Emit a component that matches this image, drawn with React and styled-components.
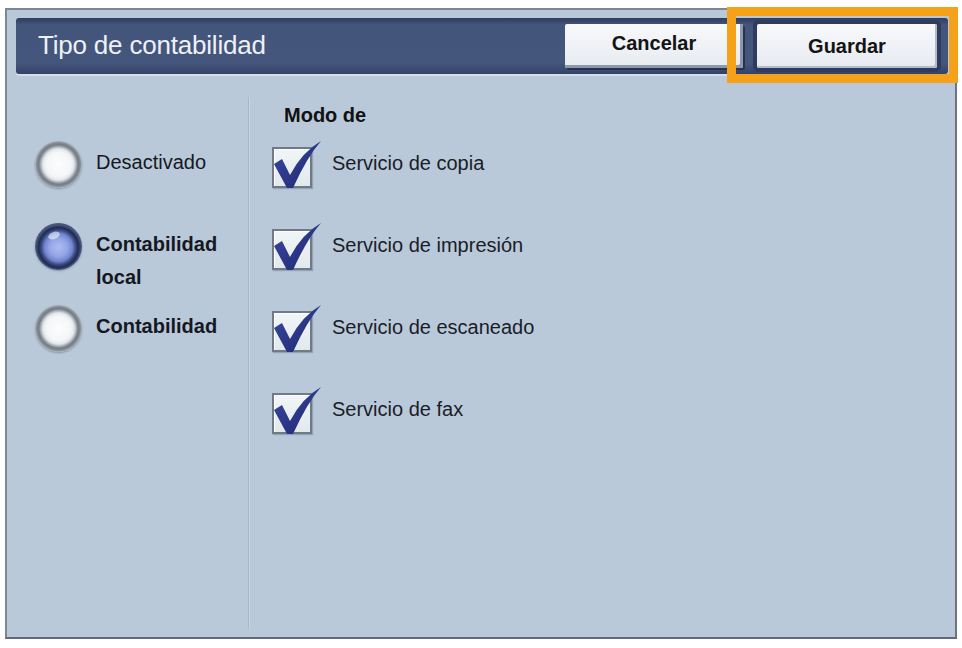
import React from 'react';
import styled, { createGlobalStyle } from 'styled-components';

const GlobalStyle = createGlobalStyle`
    body {
        margin: 0;
        background: #ffffff;
        font-family: "Liberation Sans", Arial, sans-serif;
    }
`;

const modes = [
    { id: 'off', label: ['Desactivado'], bold: false, checked: false },
    { id: 'local', label: ['Contabilidad', 'local'], bold: true, checked: true },
    { id: 'net', label: ['Contabilidad'], bold: true, checked: false },
];

const services = [
    'Servicio de copia',
    'Servicio de impresión',
    'Servicio de escaneado',
    'Servicio de fax',
];

const CheckMark = () => (
    <CheckSvg viewBox="0 0 52 54" width="52" height="54">
        <defs>
            <linearGradient id="tick" x1="0" y1="0" x2="1" y2="1">
                <stop offset="0" stopColor="#3a49a2" />
                <stop offset="1" stopColor="#1e276e" />
            </linearGradient>
        </defs>
        <path
            d="M2 27 L10 22 L18 38 Q30 15 49 4 Q35 20 21 51 L15 51 Z"
            fill="url(#tick)"
        />
    </CheckSvg>
);

const App = () => {
    return (
        <>
            <GlobalStyle />
            <Frame>
                <Header>
                    <Title>Tipo de contabilidad</Title>
                    <Actions>
                        <Button>Cancelar</Button>
                        <SaveSlot>
                            <Button selected>Guardar</Button>
                            <Highlight />
                        </SaveSlot>
                    </Actions>
                </Header>
                <Body>
                    <RadioColumn>
                        {modes.map(item => (
                            <RadioRow key={item.id}>
                                <Radio checked={item.checked} />
                                <RadioLabel bold={item.bold}>
                                    {item.label.map(line => (
                                        <div key={line}>{line}</div>
                                    ))}
                                </RadioLabel>
                            </RadioRow>
                        ))}
                    </RadioColumn>
                    <Divider />
                    <ServiceColumn>
                        <Heading>Modo de</Heading>
                        <ServiceList>
                            {services.map(name => (
                                <ServiceRow key={name}>
                                    <Box>
                                        <CheckMark />
                                    </Box>
                                    <ServiceLabel>{name}</ServiceLabel>
                                </ServiceRow>
                            ))}
                        </ServiceList>
                    </ServiceColumn>
                </Body>
            </Frame>
        </>
    );
};

const Frame = styled.div`
    box-sizing: border-box;
    width: 952px;
    height: 631px;
    margin: 8px 0 0 5px;
    padding: 8px 7px 0 9px;
    border: 2px solid #7c8794;
    border-bottom-color: #5f6a78;
    border-right-color: #6a7483;
    background: #b9c9da;
    display: flex;
    flex-direction: column;
`;

const Header = styled.div`
    height: 56px;
    border-radius: 3px;
    background: linear-gradient(#2e3c5e 0, #44557b 12%, #45567c 80%, #33426a 100%);
    display: flex;
    align-items: center;
    justify-content: space-between;
    padding: 0 11px 0 22px;
    box-shadow: 0 2px 0 #d3dde8;
`;

const Title = styled.div`
    color: #eef1f6;
    font-size: 26px;
    letter-spacing: -0.2px;
    margin-top: -1px;
`;

const Actions = styled.div`
    display: flex;
    align-items: center;
    gap: 14px;
`;

const SaveSlot = styled.div`
    position: relative;
    display: flex;
`;

const Button = styled.div`
    box-sizing: border-box;
    width: ${props => (props.selected ? '180px' : '178px')};
    height: 44px;
    display: flex;
    align-items: center;
    justify-content: center;
    padding-bottom: ${props => (props.selected ? '0' : '5px')};
    font-size: 20px;
    font-weight: bold;
    color: #141414;
    background: linear-gradient(#f8f9fb, #e6eaf0);
    border-radius: 2px;
    box-shadow: ${props =>
        props.selected
            ? '0 0 0 4px #2f3c5f, inset -2px -2px 0 #b3bccb'
            : 'inset -3px -3px 0 #8e98ad, 2px 2px 0 #27324f'};
`;

const Highlight = styled.div`
    position: absolute;
    left: -30px;
    right: -21px;
    top: -17px;
    bottom: -15px;
    border: 9px solid #f5a21a;
    pointer-events: none;
`;

const Body = styled.div`
    flex: 1;
    display: flex;
    margin-left: -9px;
`;

const RadioColumn = styled.div`
    width: 241px;
    padding: 67px 0 0 28px;
    box-sizing: border-box;
    display: grid;
    grid-auto-rows: 82px;
    align-content: start;
`;

const RadioRow = styled.div`
    display: flex;
    align-items: flex-start;
    gap: 14px;
`;

const Radio = styled.div`
    position: relative;
    flex: none;
    width: 47px;
    height: 47px;
    border-radius: 50%;
    box-shadow: 0 1px 2px rgba(40, 50, 70, 0.35);
    background: ${props =>
        props.checked
            ? 'radial-gradient(circle closest-side at 50% 52%, #aebcf3 0, #93a5e6 40%, #7385cc 62%, #3c4d84 76%, #1f2b52 88%, #49557a 100%)'
            : 'radial-gradient(circle closest-side at 50% 50%, #fdfdfe 0, #f4f6f8 52%, #e4e8ec 66%, #b3bac1 74%, #737b84 84%, #858d96 93%, #b0b7bf 100%)'};

    &::after {
        content: '';
        position: absolute;
        left: 13px;
        top: 9px;
        width: 12px;
        height: 7px;
        border-radius: 50%;
        background: rgba(255, 255, 255, ${props => (props.checked ? 0.55 : 0)});
        transform: rotate(-20deg);
    }
`;

const RadioLabel = styled.div`
    margin-top: 5px;
    font-size: 20px;
    line-height: 33px;
    font-weight: ${props => (props.bold ? 'bold' : 'normal')};
    color: #16181f;
`;

const Divider = styled.div`
    width: 1px;
    margin: 23px 0 9px;
    background: #a7b6c7;
    box-shadow: 1px 0 0 #c8d5e2;
`;

const ServiceColumn = styled.div`
    flex: 1;
    padding: 29px 0 0 23px;
    display: flex;
    flex-direction: column;
`;

const Heading = styled.div`
    margin-left: 12px;
    font-size: 20px;
    line-height: 24px;
    font-weight: bold;
    color: #111;
`;

const ServiceList = styled.div`
    margin-top: 20px;
    display: grid;
    grid-auto-rows: 82px;
`;

const ServiceRow = styled.div`
    display: flex;
    align-items: flex-start;
    gap: 20px;
`;

const Box = styled.div`
    position: relative;
    flex: none;
    box-sizing: border-box;
    width: 40px;
    height: 41px;
    background: linear-gradient(#f1f5f7, #e2e9ee);
    border: 2px solid #6f7a88;
    box-shadow: inset 1px 1px 0 #ffffff, 1px 1px 1px rgba(40, 50, 70, 0.25);
`;

const CheckSvg = styled.svg`
    position: absolute;
    left: -2px;
    top: -12px;
    overflow: visible;
`;

const ServiceLabel = styled.div`
    font-size: 20px;
    line-height: 24px;
    margin-top: 4px;
    color: #1a1d26;
`;

export default App;
